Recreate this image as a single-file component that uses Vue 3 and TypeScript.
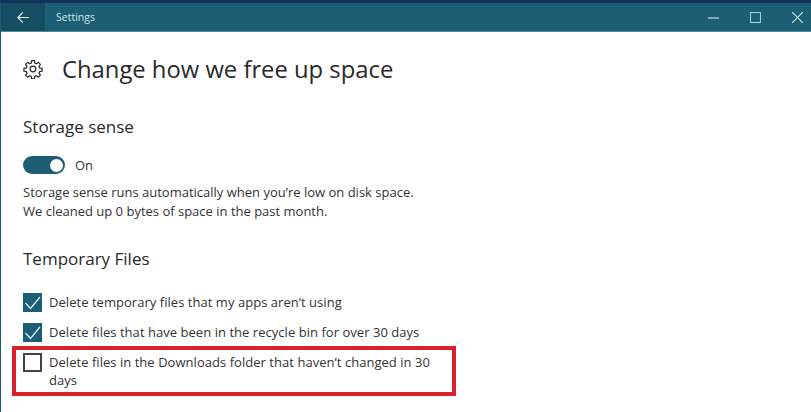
<template>
  <div class="window">
    <header class="titlebar">
      <button class="back-btn" aria-label="Back">
        <svg width="12" height="11" viewBox="0 0 12 11" fill="none" stroke="currentColor" stroke-width="1.1">
          <path d="M12 5.5H1M5.8 .4L.8 5.5L5.8 10.6" />
        </svg>
      </button>
      <span class="app-title">Settings</span>
      <div class="window-controls">
        <svg width="11" height="11" viewBox="0 0 11 11" fill="none" stroke="currentColor" stroke-width="1.1">
          <path d="M0 6H11" />
        </svg>
        <svg class="max" width="11" height="11" viewBox="0 0 11 11" fill="none" stroke="currentColor" stroke-width="1.1">
          <rect x="0.5" y="0.5" width="10" height="10" />
        </svg>
        <svg width="11" height="11" viewBox="0 0 11 11" fill="none" stroke="currentColor" stroke-width="1.1">
          <path d="M0 0L11 11M11 0L0 11" />
        </svg>
      </div>
    </header>

    <main class="content">
      <div class="page-head">
        <svg class="gear" width="20" height="20" viewBox="0 0 24 24" fill="none" stroke="#2b2b2b" stroke-width="1.5" stroke-linejoin="round">
          <circle cx="12" cy="12" r="3.4" />
          <path d="M10.3 2h3.4l.5 2.9 1.9.8 2.4-1.7 2.4 2.4-1.7 2.4.8 1.9 2.9.5v3.4l-2.9.5-.8 1.9 1.7 2.4-2.4 2.4-2.4-1.7-1.9.8-.5 2.9h-3.4l-.5-2.9-1.9-.8-2.4 1.7-2.4-2.4 1.7-2.4-.8-1.9-2.9-.5v-3.4l2.9-.5.8-1.9-1.7-2.4 2.4-2.4 2.4 1.7 1.9-.8z" />
        </svg>
        <h1>Change how we free up space</h1>
      </div>

      <section class="storage">
        <h2>Storage sense</h2>
        <div class="toggle-row">
          <span class="toggle"><span class="knob"></span></span>
          <span>On</span>
        </div>
        <p>Storage sense runs automatically when you’re low on disk space.<br />We cleaned up 0 bytes of space in the past month.</p>
      </section>

      <section class="temp">
        <h2>Temporary Files</h2>
        <ul class="checks">
          <li v-for="item in options" :key="item.label" :class="{ marked: item.marked }">
            <span class="box" :class="{ checked: item.checked }">
              <svg v-if="item.checked" width="19" height="19" viewBox="0 0 19 19" fill="none" stroke="#e8f2f5" stroke-width="1.2">
                <path d="M2.5 10L7.5 15.5L17 4" />
              </svg>
            </span>
            <span class="label">{{ item.label }}</span>
          </li>
        </ul>
      </section>
    </main>
  </div>
</template>

<script setup lang="ts">
interface Option {
  label: string;
  checked: boolean;
  marked?: boolean;
}

const options: Option[] = [
  { label: 'Delete temporary files that my apps aren’t using', checked: true },
  { label: 'Delete files that have been in the recycle bin for over 30 days', checked: true },
  { label: 'Delete files in the Downloads folder that haven’t changed in 30 days', checked: false, marked: true }
];
</script>

<style>
html,
body {
  margin: 0;
  background: #fff;
  overflow: hidden;
}
</style>

<style scoped>
.window {
  width: 811px;
  height: 412px;
  overflow: hidden;
  box-sizing: border-box;
  border-top: 3px solid #14305c;
  border-left: 1px solid #1d5a70;
  background: #fff;
  font-family: "Open Sans", "Liberation Sans", sans-serif;
  color: #333;
}

.titlebar {
  height: 28px;
  margin-left: -1px;
  display: flex;
  align-items: center;
  background: #1c5f75;
  color: #cfe4e8;
  border-bottom: 1px solid #4d8a9a;
}

.back-btn {
  width: 45px;
  height: 100%;
  border: none;
  padding: 0;
  display: flex;
  align-items: center;
  justify-content: center;
  background: #154e62;
  color: #e4f0f2;
}

.app-title {
  margin-left: 11px;
  font-size: 10.5px;
}

.window-controls {
  margin-left: auto;
  margin-right: 8px;
  display: flex;
  gap: 31px;
}

.window-controls .max {
  color: #a8cdd6;
}

.content {
  padding: 0 0 0 22px;
}

.page-head {
  display: flex;
  align-items: center;
  gap: 19px;
  margin-top: 18px;
  height: 37px;
}

h1 {
  margin: 0;
  font-size: 23.8px;
  font-weight: 400;
  color: #2a2a2a;
}

h2 {
  margin: 0;
  font-size: 17px;
  font-weight: 400;
  color: #2a2a2a;
}

.storage {
  margin-top: 28px;
}

.toggle-row {
  margin-top: 18px;
  display: flex;
  align-items: center;
  gap: 10px;
  font-size: 13px;
}

.toggle {
  width: 42px;
  height: 18px;
  border-radius: 9px;
  background: #1b5e75;
  display: flex;
  align-items: center;
  justify-content: flex-end;
  padding-right: 2px;
  box-sizing: border-box;
}

.knob {
  width: 13px;
  height: 13px;
  border-radius: 50%;
  background: #fff;
}

p {
  margin: 9px 0 0;
  font-size: 13px;
  line-height: 19px;
}

.temp {
  margin-top: 26px;
}

.checks {
  list-style: none;
  margin: 23px 0 0;
  padding: 0;
  font-size: 13px;
  line-height: 19px;
}

.checks li {
  display: flex;
  gap: 7px;
  margin-top: 11px;
  width: 430px;
}

.checks li.marked {
  box-sizing: border-box;
  width: 444px;
  margin: 4px 0 0 -11px;
  padding: 3px 14px 3px 7px;
  border: 4px solid #d9202c;
  line-height: 18px;
}

.box {
  flex: none;
  width: 19px;
  height: 19px;
  box-sizing: border-box;
  border: 2px solid #444;
}

.box.checked {
  border: none;
  background: #1b5e75;
}

.box svg {
  display: block;
}

.label {
  flex: 1;
  letter-spacing: 0.003em;
}
</style>
